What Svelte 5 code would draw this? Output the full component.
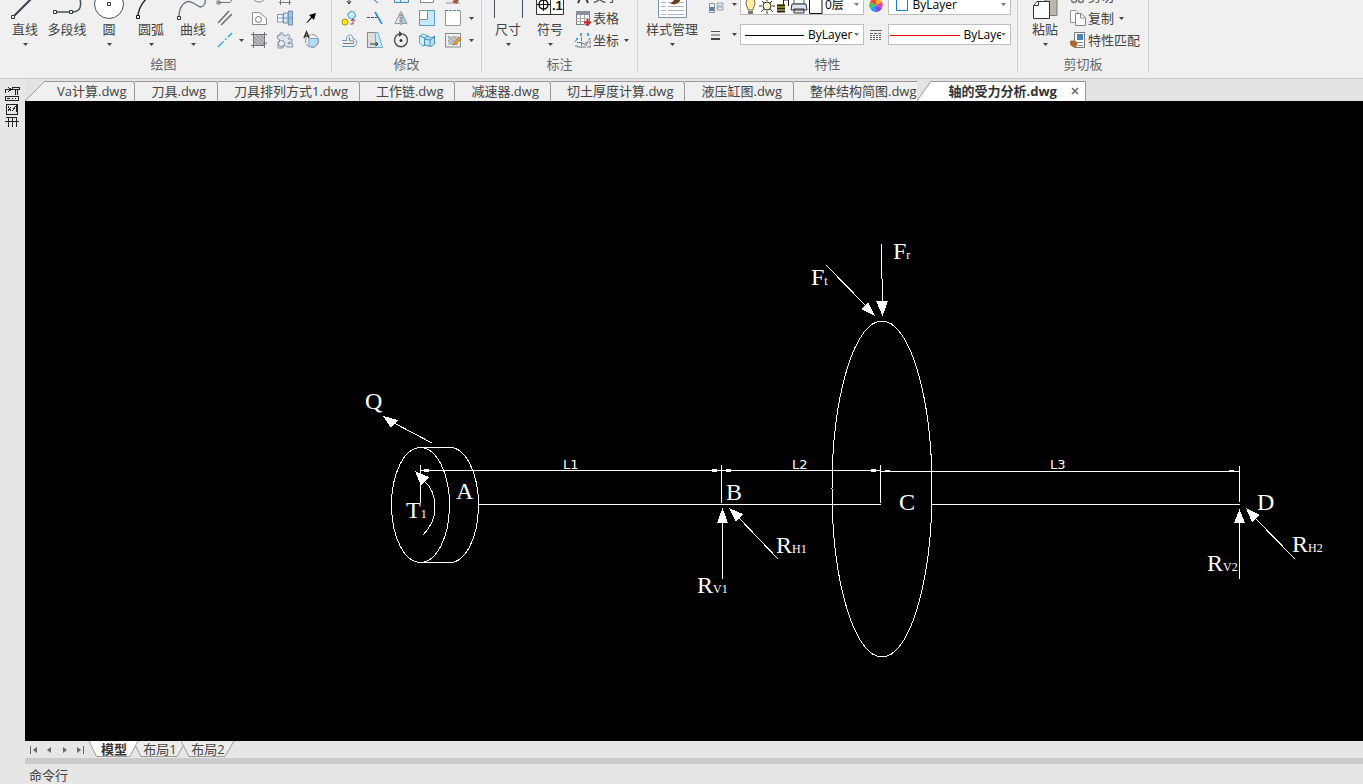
<script>
	const drawMain = [
		{ label: '直线', icon: '<path d="M5 27L24 8" stroke="#3a3f4d" stroke-width="2"/><path d="M2.500 26.500h3v3h-3z" fill="#fff" stroke="#333"/>' },
		{ label: '多段线', plain: true, icon: '<path d="M5 23H21C28 23 31 19 29 10" stroke="#4a4f5c" stroke-width="1.500"/><path d="M2.500 21.500h3v3h-3zM18.500 21.500h3v3h-3z" fill="#fff" stroke="#333"/>' },
		{ label: '圆', icon: '<circle cx="16" cy="15" r="14.500" fill="#fff" stroke="#4a4f5c"/><path d="M14.500 13.500h3v3h-3z" stroke="#333"/>' },
		{ label: '圆弧', icon: '<path d="M3 28C3 21 7 14 12 9" stroke="#333" stroke-width="1.500"/><path d="M1.500 26.500h3v3h-3z" fill="#fff" stroke="#111"/>' },
		{ label: '曲线', icon: '<path d="M2 28C2 17 8 11 14 13S22 20 26 17S27 11 29 9" stroke="#7a7d84" stroke-width="1.500"/><path d="M.500 27.500h3v3h-3z" fill="#fff" stroke="#333"/>' }
	];

	const drawTools = [
		{ name: '构造线', icon: '<path d="M3 16.500H15L19 11M2 15h3v3H2z" stroke="#777"/>' },
		{ name: '椭圆', icon: '<ellipse cx="10" cy="11" rx="6" ry="5" stroke="#888"/>' },
		{ name: '矩形', icon: '<path d="M4 16.500H16M5.500 13v6M14.500 13v6" stroke="#777"/>' },
		{ name: '点', icon: '' },
		{ name: '双线', icon: '<path d="M3 15L14 3M6 17L17 6" stroke="#686b72" stroke-width="1.500"/>' },
		{ name: '面域', icon: '<path d="M3.500 16.500V4.500H10.500L17.500 10.500V16.500z" fill="#fff" stroke="#8b8f96"/><circle cx="9.500" cy="11.500" r="3" stroke="#777"/>' },
		{ name: '轴', icon: '<path d="M2.500 6.500H8V14H2.500z" fill="#fff" stroke="#8894a8"/><path d="M8.500 5H13V15H8.500z" fill="#d5e5f4" stroke="#7c8ba3"/><path d="M13.500 3H17.500V17H13.500z" fill="#a5c5e6" stroke="#7890b0"/><path d="M2 10H17" stroke="#6a9fd8"/>' },
		{ name: '箭头', icon: '<path d="M15 5L13 12L11 10L6 15L5.500 14.500L10 9L8 7z" fill="#000"/>' },
		{ name: '中心线', icon: '<path d="M3 17L17 3" stroke="#35aee0" stroke-width="1.500" stroke-dasharray="8 2 2 2"/>' },
		{ name: '填充', icon: '<path d="M4.500 4.500H15.500V13L13 15.500H4.500z" fill="#b5b9be" stroke="#777"/><path d="M5 7L13 15M5 11L9 15M7 5L15 13M11 5L15 9" stroke="#8d939a"/><path d="M2 4.500H18M2 15.500H15L18 12M4.500 2V18M15.500 2V18" stroke="#6f7379"/>' },
		{ name: '齿轮', icon: '<path d="M5 3H8V5L11 6L13 4L15 6L13 9H17V12H14L13 14L17 13L18 17H12L9 15L8 18H3V12L5 10L2 8L3 5L5 6z" fill="#dde5f3" stroke="#8a91a0"/><circle cx="6.500" cy="13.500" r="3" fill="#eef1f7" stroke="#7d8694"/>' },
		{ name: '旋转视图', icon: '<circle cx="11" cy="11" r="6.500" stroke="#888" stroke-dasharray="5 1"/><path d="M8 8.500H17C18 13 15 17 11 17C8 17 7 13 8 8.500z" fill="#b3dcf6" stroke="#82a8c4"/><path d="M3 8L5.500 2L8 8M4 6H7" stroke="#333" stroke-width="1.500"/>' }
	];

	const modifyTools = [
		{ name: '移动', icon: '<path d="M10 13V18M8 15l2 3l2-3" stroke="#333"/>' },
		{ name: '延伸', icon: '<path d="M8 13L13 17" stroke="#2670c0"/>' },
		{ name: '阵列', icon: '<path d="M3.500 9.500H9.500V16.500H3.500zM9.500 8.500H17.500V16.500H9.500z" fill="#d8eefa" stroke="#4a88ba"/>' },
		{ name: '拉伸', icon: '<path d="M3.500 5.500H16.500V16.500H3.500z" fill="#fff" stroke="#888"/>' },
		{ name: '清理', icon: '<path d="M3 17H17" stroke="#999"/><path d="M11 14l5 0l-2 4l-5-2z" fill="#a45b45"/>' },
		{ name: '复制', icon: '<rect x="9" y="4" width="7" height="7" rx="3" transform="rotate(-35 12 7)" fill="#c9e9fb" stroke="#4b9bd0"/><circle cx="6" cy="14" r="3" fill="#ffec00" stroke="#a38e20"/><path d="M11 16H14V11M12 13l2-2l2 2" stroke="#9c4141"/>' },
		{ name: '修剪', icon: '<path d="M2 9.500H12" stroke="#444" stroke-dasharray="3 1"/><path d="M10 4L17 16" stroke="#2b83d6" stroke-width="1.500"/>' },
		{ name: '镜像', icon: '<path d="M4 15.500L9 5V15.500z" fill="#e9f3f8" stroke="#8799a5"/><path d="M11 5L16 15.500H11z" fill="#b5cedf" stroke="#879dad"/><path d="M10 3V17" stroke="#777" stroke-dasharray="2 1"/>' },
		{ name: '缩放', icon: '<path d="M2.500 2.500H17.500V17.500H2.500z" fill="#c5e9fb" stroke="#5b9dc6"/><path d="M2.500 2.500H10.500V11.500H2.500z" fill="#fff" stroke="#858d94"/>' },
		{ name: '打断', arrow: true, icon: '<path d="M3 3H17V17H3z" fill="#fff"/><path d="M2.500 3V17.500H17.500V3" stroke="#999"/><path d="M2 2.500H18" stroke="#318dc9" stroke-dasharray="3 1"/>' },
		{ name: '偏移', icon: '<path d="M3 10.500H8C5 4 15 3 14 9H15C19 10 18 15 15 16.500H3" stroke="#5b9fc8"/><path d="M4 13.500H14C17 12 14 10 11 11L10 7" stroke="#777"/>' },
		{ name: '拉长', icon: '<path d="M2.500 2.500H10.500V17.500H2.500z" fill="#ddd" stroke="#888"/><path d="M10.500 2.500H13L17.500 17.500H10.500z" fill="#c5e9fb" stroke="#71afd0"/><path d="M5 14H13M11 12l2 2l-2 2" stroke="#333"/>' },
		{ name: '旋转', icon: '<path d="M8 4A6.500 6.500 0 1 0 12 4" stroke="#555" stroke-width="1.500"/><path d="M8 1L12 4L8 7z" fill="#444"/><circle cx="10" cy="10.500" r="1.500" fill="#333"/>' },
		{ name: '三维阵列', icon: '<path d="M2.500 6L6 4L11 6V14L6 16L2.500 13z" fill="#d5f0fb" stroke="#56a2cf"/><path d="M7.500 9L10 6L15 8L17.500 6V14L14 16.500L7.500 15z" fill="#b8e2f8" stroke="#468fbd"/><path d="M7.500 9L13 10V16M13 10L17 7M3 6L8 8" stroke="#468fbd"/>' },
		{ name: '编辑填充', arrow: true, icon: '<path d="M2.500 3.500H17.500V17H2.500z" fill="#eee" stroke="#888"/><path d="M5 6H15V15H5z" fill="#c4c8cb"/><path d="M5 10L10 15M5 6L14 15M10 6L15 11" stroke="#999"/><path d="M11 13L16 7L18 9L13 14L10 15z" fill="#e8a33d" stroke="#b67a35"/>' }
	];

	const dimMain = [
		{ label: '尺寸', icon: '<path d="M2.500 4V29M30.500 4V29" stroke="#4a4f5c"/>' },
		{ label: '符号', icon: '<path d="M2.500 2.500H29.500V25.500H2.500z" fill="#fff" stroke="#333"/><path d="M16.500 3V25" stroke="#333"/><circle cx="9.500" cy="15.500" r="4.500" stroke="#111" stroke-width="1.500"/><path d="M3 15.500H16M9.500 9V22" stroke="#111"/><text x="18" y="21" fill="#111" font-family="Liberation Sans" font-weight="bold" font-size="13">.1</text>' }
	];

	const dimTools = [
		{ label: '文字', icon: '<path d="M5 17L10 6L15 17M7 13H13" stroke="#444" stroke-width="2"/>' },
		{ label: '表格', icon: '<path d="M3.500 4.500H16.500V16.500H3.500z" fill="#fff" stroke="#777"/><path d="M3 3H17V7H3z" fill="#87909b"/><path d="M3 10.500H17M3 13.500H17M7.500 7V17M11.500 7V17" stroke="#aaa"/><path d="M11 14.500H18M14.500 11V18" stroke="#c52020" stroke-width="2"/>' },
		{ label: '坐标', arrow: true, icon: '<path d="M4 17H18M8.500 7V18M4 12.500H8L13 15L17 8V17M13 12V17" stroke="#727981" stroke-dasharray="4 1"/><path d="M3 8l2 2m0-2l-3 4M7 3l2 3m0-3l-2 3M14 3l2 3m0-3l-2 3M2 16h3" stroke="#3c8cc8"/>' }
	];

	const clipTools = [
		{ label: '剪切', icon: '<circle cx="6" cy="14" r="2.500" stroke="#777" stroke-width="1.500"/><circle cx="13" cy="14" r="2.500" stroke="#777" stroke-width="1.500"/><path d="M7 12L12 4M12 12L7 4" stroke="#777"/>' },
		{ label: '复制', arrow: true, icon: '<path d="M2.500 2.500H8L10.500 5V14.500H2.500z" fill="#fff" stroke="#999"/><path d="M7.500 5.500H13L17.500 9.500V17.500H7.500z" fill="#fff" stroke="#888"/><path d="M12.500 6V10H17" stroke="#888"/>' },
		{ label: '特性匹配', icon: '<path d="M6.500 2.500H16.500V17.500H6.500z" fill="#fff" stroke="#777"/><path d="M9 4H15V10H9z" fill="#4a85b8"/><path d="M10 12.500H15M10 15.500H15" stroke="#888"/><path d="M2 11C5 10 9 11 10 13L8 17C5 18 3 16 2 14z" fill="#b06a30"/>' }
	];

	const styleTool = { label: '样式管理', icon: '<path d="M2.500 2.500H30.500V28.500H2.500z" fill="#fff" stroke="#7892aa"/><path d="M5 13.500H10M5 17.500H10M5 21.500H10M5 25.500H10M12 13.500H28M12 17.500H28M12 21.500H28M12 25.500H28" stroke="#a5b7ca"/><path d="M14 14C18 13 18 10 20 8L25 10C23 15 18 17 14 14z" fill="#6d3d20"/>' };
	const pasteTool = { label: '粘贴', icon: '<path d="M16 4H28V26.500H16z" fill="#bdb6ad" stroke="#777"/><path d="M4.500 16.500L8 12.500H20.500V29.500H4.500z" fill="#fff" stroke="#333"/><path d="M9.500 13V16.500H5" stroke="#333"/>' };

	const files = ['Va计算.dwg', '刀具.dwg', '刀具排列方式1.dwg', '工作链.dwg', '减速器.dwg', '切土厚度计算.dwg', '液压缸图.dwg', '整体结构简图.dwg'];

	// drawing annotations, in drawing units
	const marks = [
		{ x: 365, y: 409, t: 'Q' },
		{ x: 456, y: 499, t: 'A' },
		{ x: 406, y: 518, t: 'T', sub: '1' },
		{ x: 726, y: 500, t: 'B' },
		{ x: 899, y: 510, t: 'C' },
		{ x: 1257, y: 510, t: 'D' },
		{ x: 697, y: 593, t: 'R', sub: 'V1' },
		{ x: 776, y: 553, t: 'R', sub: 'H1' },
		{ x: 1207, y: 571, t: 'R', sub: 'V2' },
		{ x: 1292, y: 552, t: 'R', sub: 'H2' },
		{ x: 893, y: 259, t: 'F', sub: 'r' },
		{ x: 811, y: 285, t: 'F', sub: 't' }
	];
	const heads = [
		'383,416 398,420 391,428',
		'415,471 429,477 421,486',
		'722.5,508 717,523 728,523',
		'729,508 743,514 736,522',
		'1239.5,509 1234,523 1245,523',
		'1246,508 1260,515 1252,522',
		'882.5,316 876,301 888,301',
		'875,316 861,309 868,302'
	];
</script>

{#snippet caret()}
	<svg class="caret" viewBox="0 0 5 3"><path d="M0 0H5L2.500 3z" /></svg>
{/snippet}

{#snippet big(tool, wide)}
	<button class="big" class:wide>
		<svg class="pic" viewBox="0 0 32 32" fill="none">{@html tool.icon}</svg>
		<span>{tool.label}</span>
		<i>{#if !tool.plain}{@render caret()}{/if}</i>
	</button>
{/snippet}

{#snippet row(tool)}
	<button class="row">
		<svg viewBox="0 0 20 20" fill="none">{@html tool.icon}</svg>
		<span>{tool.label}</span>
		{#if tool.arrow}{@render caret()}{/if}
	</button>
{/snippet}

<div class="app">
	<header class="ribbon">
		<section class="draw">
			<div class="body">
				{#each drawMain as tool}{@render big(tool)}{/each}
				<div class="tools first-drop">
					{#each drawTools as tool, i}
						<button class="tool" aria-label={tool.name}><svg viewBox="0 0 20 20" fill="none">{@html tool.icon}</svg></button>
						{#if i % 4 === 0}<i>{#if i === 8}{@render caret()}{/if}</i>{/if}
					{/each}
				</div>
			</div>
			<h2>绘图</h2>
		</section>
		<section class="modify">
			<div class="body">
				<div class="tools last-drop">
					{#each modifyTools as tool, i}
						<button class="tool" aria-label={tool.name}><svg viewBox="0 0 20 20" fill="none">{@html tool.icon}</svg></button>
						{#if i % 5 === 4}<i>{#if tool.arrow}{@render caret()}{/if}</i>{/if}
					{/each}
				</div>
			</div>
			<h2>修改</h2>
		</section>
		<section class="dims">
			<div class="body">
				{#each dimMain as tool}{@render big(tool)}{/each}
				<div class="rows">{#each dimTools as tool}{@render row(tool)}{/each}</div>
			</div>
			<h2>标注</h2>
		</section>
		<section class="props">
			<div class="body">
				{@render big(styleTool, true)}
				<div class="fields">
					<div class="line">
						<button class="mini" aria-label="图层管理">
							<svg viewBox="0 0 20 20" fill="none"><path d="M3.500 8.500H8.500V17.500H3.500z" fill="#e8eff6" stroke="#8a97a5" /><path d="M4 12h4v4H4z" fill="#5585ad" /><path d="M11 8h6v3h-6zM11 12h6v3h-6z" fill="#e0e6eb" stroke="#9da5ac" /></svg>
							{@render caret()}
						</button>
						<div class="combo">
							<svg class="states" viewBox="0 0 84 20" fill="none">
								<path d="M5 8C5 2 14 2 14 8C14 11 12 12 12 15H7C7 12 5 11 5 8z" fill="#fff0a0" stroke="#77683c" /><path d="M7 16H12V19H7z" fill="#777" />
								<circle cx="26" cy="11" r="4" fill="#fff1c8" stroke="#333" /><path d="M26 3V6M26 16V19M18 11H21M31 11H34M21 6l2 2M29 14l3 3M31 6l-2 2M23 14l-3 3" stroke="#333" />
								<path d="M36 9H44V17H36z" fill="#e3df36" /><path d="M36 10.500H44M36 13.500H44M36 16.500H44" stroke="#222" stroke-width="2" /><path d="M42.500 10V5H47.500V11" stroke="#222" />
								<path d="M53 3H63V9H53z" fill="#fff" stroke="#555" /><path d="M51 9H65L66 15H50zM53 14H63V18H53z" fill="#dce3ed" stroke="#333" />
								<path d="M68.500 2.500H81V18.500H68.500z" fill="#fff" stroke="#111" />
							</svg>
							<select aria-label="图层"><option>0层</option></select>
							{@render caret()}
						</div>
						<svg class="wheel" viewBox="0 0 14 14"><path d="M7 7V0A7 7 0 0 1 13 4z" fill="#ffae27" /><path d="M7 7L13 4A7 7 0 0 1 13 10z" fill="#e3429d" /><path d="M7 7L13 10A7 7 0 0 1 7 14z" fill="#794ce0" /><path d="M7 7V14A7 7 0 0 1 1 10z" fill="#2e9cf0" /><path d="M7 7L1 10A7 7 0 0 1 1 4z" fill="#46c34d" /><path d="M7 7L1 4A7 7 0 0 1 7 0z" fill="#f34936" /></svg>
						<div class="combo">
							<svg class="swatch" viewBox="0 0 14 20" fill="none"><path d="M1.500 4.500H12.500V15.500H1.500z" fill="#fff" stroke="#1979cb" /></svg>
							<select aria-label="颜色"><option>ByLayer</option></select>
							{@render caret()}
						</div>
					</div>
					<div class="line">
						<button class="mini" aria-label="线宽设置">
							<svg viewBox="0 0 20 20" fill="none"><path d="M5 6.500H14M5 10H14" stroke="#555" /><path d="M5 14H14" stroke="#444" stroke-width="2" /></svg>
							{@render caret()}
						</button>
						<div class="combo">
							<svg class="stroke" viewBox="0 0 60 20"><path d="M1 10.500H60" stroke="#000" /></svg>
							<select aria-label="线型"><option>ByLayer</option></select>
							{@render caret()}
						</div>
						<svg class="wheel" viewBox="0 0 14 14" fill="none"><path d="M1 2.500H13" stroke="#666" /><path d="M1 5.500H13" stroke="#666" stroke-dasharray="3 1" /><path d="M1 7.500H13M1 9.500H13M1 11.500H13" stroke="#666" stroke-dasharray="2 1" /></svg>
						<div class="combo">
							<svg class="weight" viewBox="0 0 70 20"><path d="M0 10.500H70" stroke="#e60000" shape-rendering="crispEdges" /></svg>
							<select aria-label="线宽"><option>ByLayer</option></select>
							{@render caret()}
						</div>
					</div>
				</div>
			</div>
			<h2>特性</h2>
		</section>
		<section class="clip">
			<div class="body">
				{@render big(pasteTool)}
				<div class="rows">{#each clipTools as tool}{@render row(tool)}{/each}</div>
			</div>
			<h2>剪切板</h2>
		</section>
	</header>

	<div class="work">
		<aside>
			<svg viewBox="0 0 16 44" fill="none" stroke="#222" shape-rendering="crispEdges">
				<path d="M1.500 7V3.500H6M4 1l3 2.500L4 6M8.500 1.500H15.500V3.500H8.500zM11 4v5M13 4v5" />
				<path d="M1.500 10.500H14.500V14.500H1.500zM3 12.500h3M8 12.500h1M11 12.500h1" />
				<path d="M2.500 18.500H13.500V28.500H2.500zM4 20l3 5M4 25l3-4M8 25l4-5v6" />
				<path d="M2 31.500H13M1 35.500H15M4.500 31V41M8.500 31V41M12.500 31V41" />
			</svg>
		</aside>
		<main>
			<nav class="files">
				<svg class="edge" viewBox="0 0 20 20"><path d="M0 20L20 0V20z" fill="#f0f0f0" /><path d="M0 20L20 0" stroke="#999" /></svg>
				{#each files as file}
					<button class="file">{file}</button>
				{/each}
				<div class="file active">
					<svg class="slant" viewBox="0 0 14 20"><path d="M0 20L14 0V20z" fill="#fff" /><path d="M0 20L14 0" stroke="#999" /></svg>
					<button>轴的受力分析.dwg</button>
					<button class="close" aria-label="关闭"><svg viewBox="0 0 8 8"><path d="M1 1L7 7M7 1L1 7" stroke="#666" stroke-width="1.500" /></svg></button>
				</div>
			</nav>

			<div class="canvas">
				<svg viewBox="25 101 1338 640" preserveAspectRatio="xMinYMin meet" fill="none" stroke="#fff">
					<g shape-rendering="crispEdges">
						<ellipse cx="420.5" cy="505" rx="29" ry="57.5" />
						<path d="M420 447.500H450C466 447.500 478.500 474 478.500 505C478.500 536 466 562.500 450 562.500H420" />
						<ellipse cx="882" cy="489" rx="50" ry="168" />
						<path d="M478 504.500H881M932 504.500H1240" />
						<path d="M421 470.500H881M881 471.500H1240" />
						<path d="M420.500 465V503M721.500 465V503M880.500 465V503M1239.500 466V502" />
						<path d="M424 470.500h5M712 470.500h5M726 470.500h5M871 470.500h5" stroke-width="3" />
						<path d="M885 470.500h5M1229 470.500h5" />
						<path d="M432 443L394 423M423 535Q435 523 435 507Q435 490 424 481" />
						<path d="M722.500 579V522M778 559L739 518M1239.500 579V522M1295 559L1255 518" />
						<path d="M881.500 244V279M882.500 279V302M826 265L866 306" />
						{#each heads as points}
							<polygon {points} fill="#fff" stroke="none" />
						{/each}
					</g>
					<g class="lengths">
						<text x="563" y="469">L1</text>
						<text x="792" y="469">L2</text>
						<text x="1050" y="469">L3</text>
					</g>
					<g class="marks">
						{#each marks as m}
							<text x={m.x} y={m.y}>{m.t}{#if m.sub}<tspan class="sub">{m.sub}</tspan>{/if}</text>
						{/each}
					</g>
				</svg>
			</div>

			<nav class="layouts">
				<button class="step" aria-label="首个"><svg viewBox="0 0 8 8"><path d="M1 0H2V8H1zM8 1V7L4 4z" /></svg></button>
				<button class="step" aria-label="上一个"><svg viewBox="0 0 8 8"><path d="M6 1V7L2 4z" /></svg></button>
				<button class="step" aria-label="下一个"><svg viewBox="0 0 8 8"><path d="M2 1V7L6 4z" /></svg></button>
				<button class="step" aria-label="末个"><svg viewBox="0 0 8 8"><path d="M0 1V7L4 4zM6 0H7V8H6z" /></svg></button>
				{#each ['模型', '布局1', '布局2'] as name, i}
					<button class="layout" class:current={i === 0}>
						<svg viewBox="0 0 54 16" preserveAspectRatio="none"><path d="M0 0L8 15.500H44L53 0" /></svg>
						<span>{name}</span>
					</button>
				{/each}
			</nav>
			<div class="split"></div>
			<footer>命令行</footer>
		</main>
	</div>
</div>

<style>
	:global(body) {
		margin: 0;
	}

	.app {
		display: flex;
		flex-direction: column;
		min-height: 100vh;
		background: #e6e6e6;
		color: #444;
		font-family: "Open Sans", "Noto Sans CJK SC", sans-serif;
		font-size: 13px;
		line-height: 16px;
	}

	button,
	select {
		padding: 0;
		border: 0;
		background: none;
		color: inherit;
		font: inherit;
		white-space: nowrap;
	}

	svg {
		display: block;
		flex: none;
	}

	i {
		display: flex;
		align-items: center;
		justify-content: center;
	}

	.caret {
		width: 5px;
		height: 3px;
		fill: #444;
	}

	.ribbon {
		display: flex;
		padding-bottom: 5px;
		border-bottom: 1px solid #cbcbcb;
		background: #f0f0f0;
	}

	section {
		box-sizing: border-box;
		border-right: 1px solid #d5d5d5;
	}

	.draw { width: 332px; }
	.modify { width: 150px; }
	.dims { width: 156px; }
	.props { width: 380px; }
	.clip { width: 131px; }

	.body {
		display: flex;
		align-items: flex-end;
		height: 51px;
		padding: 0 4px;
		overflow: hidden;
	}

	h2 {
		margin: 5px 0 0;
		color: #666;
		font-size: 13px;
		font-weight: normal;
		line-height: 17px;
		text-align: center;
	}

	.draw h2 {
		padding-right: 4px;
	}

	.big {
		display: flex;
		flex: none;
		flex-direction: column;
		align-items: center;
		width: 42px;
	}

	.wide {
		width: 60px;
	}

	.pic {
		width: 32px;
		height: 32px;
	}

	.big i {
		height: 14px;
	}

	.tools {
		display: grid;
		grid-auto-rows: 22px;
	}

	.first-drop {
		grid-template-columns: 22px 10px repeat(3, 26px);
	}

	.last-drop {
		grid-template-columns: repeat(5, 26px) 10px;
	}

	.tool {
		display: flex;
		align-items: center;
		justify-content: center;
	}

	.tool svg,
	.row > svg:first-child,
	.mini > svg:first-child {
		width: 20px;
		height: 20px;
	}

	.rows {
		display: flex;
		flex-direction: column;
		padding-left: 2px;
	}

	.row {
		display: flex;
		align-items: center;
		height: 22px;
	}

	.row span {
		padding-bottom: 1px;
	}

	.row .caret {
		margin-left: 5px;
	}

	.dims .body {
		padding-left: 5px;
	}

	.clip .body {
		padding-left: 6px;
	}

	.fields {
		display: flex;
		flex: 1;
		flex-direction: column;
		gap: 9px;
		min-width: 0;
		padding: 0 2px 6px 4px;
	}

	.line {
		display: flex;
		align-items: center;
	}

	.mini {
		display: flex;
		align-items: center;
		gap: 6px;
		width: 34px;
	}

	.combo {
		display: flex;
		flex: 1;
		align-items: center;
		box-sizing: border-box;
		height: 21px;
		min-width: 0;
		padding-right: 4px;
		border: 1px solid #bfbfbf;
		background: #fff;
		color: #000;
		font-size: 12px;
	}

	.combo select {
		flex: 1;
		min-width: 0;
		overflow: hidden;
		appearance: none;
	}

	.combo .caret {
		fill: #777;
	}

	.states {
		width: 84px;
		height: 20px;
	}

	.swatch {
		width: 14px;
		height: 20px;
		margin: 0 4px 0 6px;
	}

	.stroke {
		width: 60px;
		height: 20px;
		margin: 0 4px 0 3px;
	}

	.weight {
		width: 70px;
		height: 20px;
		margin: 0 4px 0 1px;
	}

	.wheel {
		width: 14px;
		height: 14px;
		margin: 0 5px;
	}

	.work {
		display: flex;
		flex: 1;
	}

	aside {
		width: 25px;
		padding-top: 7px;
	}

	aside svg {
		width: 16px;
		height: 44px;
		margin-left: 4px;
	}

	main {
		display: flex;
		flex: 1;
		flex-direction: column;
		min-width: 0;
	}

	.files {
		display: flex;
		height: 20px;
		padding-top: 2px;
		background: #e3e3e3;
	}

	.edge {
		width: 20px;
		height: 20px;
	}

	.file {
		box-sizing: border-box;
		padding: 0 11px 2px 16px;
		border-top: 1px solid #999;
		border-right: 1px solid #999;
		border-top-right-radius: 3px;
		background: #f0f0f0;
	}

	.edge + .file {
		padding-right: 8px;
		padding-left: 12px;
	}

	.file:nth-last-child(2) {
		padding-right: 0;
		border-right: 0;
		border-top-right-radius: 0;
	}

	.active {
		display: flex;
		align-items: center;
		padding: 0 6px 2px 18px;
		border-top-right-radius: 0;
		background: #fff;
		color: #333;
		font-weight: bold;
		position: relative;
		margin-left: 14px;
	}

	.slant {
		position: absolute;
		top: -1px;
		left: -14px;
		width: 14px;
		height: 20px;
	}

	.close {
		margin-left: 14px;
	}

	.close svg {
		width: 8px;
		height: 8px;
	}

	.canvas {
		flex: 1;
		background: #000;
	}

	.canvas svg {
		width: 100%;
	}

	.marks,
	.lengths {
		fill: #fff;
		stroke: none;
	}

	.marks {
		font-family: "Liberation Serif", serif;
		font-size: 24px;
	}

	.sub {
		font-size: 12px;
	}

	.lengths {
		font-family: "DejaVu Sans", sans-serif;
		font-size: 13px;
	}

	.layouts {
		display: flex;
		height: 17px;
	}

	.step {
		display: flex;
		align-items: center;
		justify-content: center;
		width: 16px;
	}

	.step svg {
		width: 8px;
		height: 8px;
		fill: #666;
	}

	.layout {
		position: relative;
		width: 54px;
		height: 16px;
		margin-right: -6px;
		line-height: 14px;
	}

	.layout svg {
		position: absolute;
		top: 0;
		left: 0;
		width: 100%;
		height: 16px;
		fill: #ececec;
		stroke: #999;
	}

	.layout span {
		position: relative;
	}

	.current {
		z-index: 1;
		width: 50px;
		color: #333;
		font-weight: bold;
	}

	.current svg {
		fill: #fff;
	}

	.split {
		height: 6px;
		background: #cbcbcb;
	}

	footer {
		padding: 3px 4px 1px;
	}
</style>
